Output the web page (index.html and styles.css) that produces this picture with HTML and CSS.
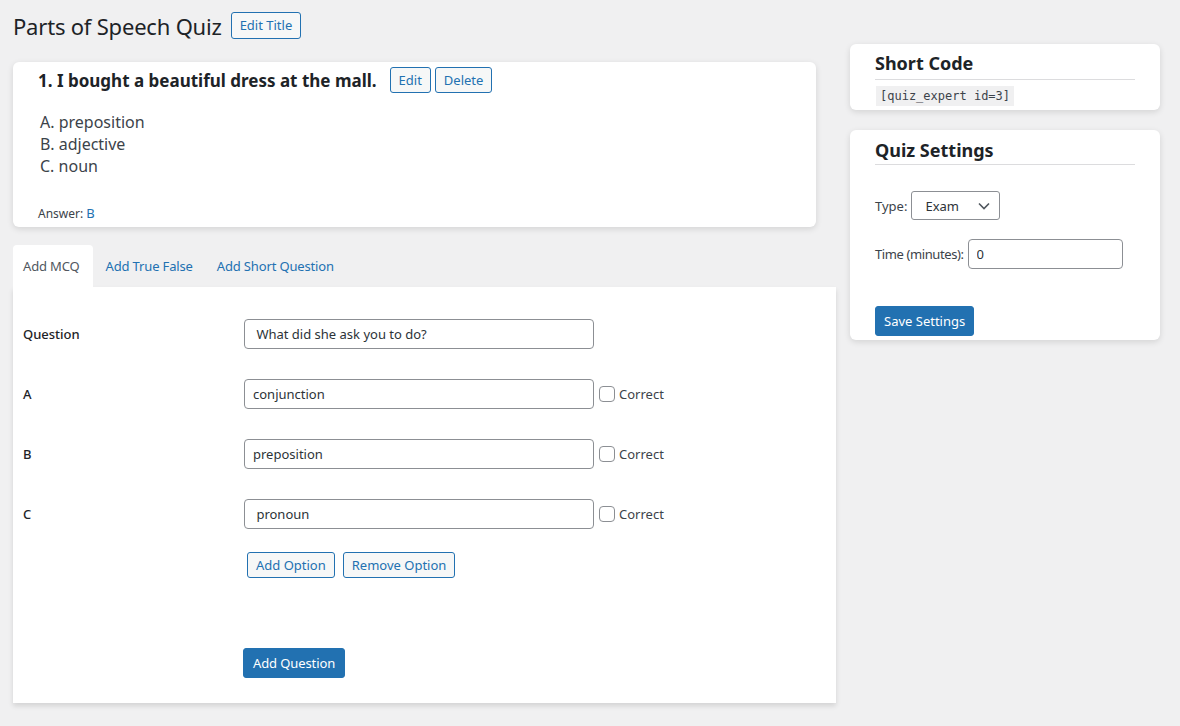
FILE: index.html
```html
<!DOCTYPE html>
<html lang="en">
<head>
<meta charset="utf-8">
<title>Parts of Speech Quiz</title>
<link rel="stylesheet" href="styles.css">
</head>
<body>
<div class="page">
  <div class="main">
    <div class="header">
      <h1 class="title">Parts of Speech Quiz</h1>
      <button class="btn btn-sec">Edit Title</button>
    </div>

    <div class="qcard">
      <div class="qhead">
        <h3 class="qtitle">1. I bought a beautiful dress at the mall.</h3>
        <button class="btn btn-sec btn-sm">Edit</button>
        <button class="btn btn-sec btn-sm">Delete</button>
      </div>
      <div class="qopts">
        <div>A. preposition</div>
        <div>B. adjective</div>
        <div>C. noun</div>
      </div>
      <div class="answer">Answer: <span class="ans">B</span></div>
    </div>

    <div class="tabs">
      <a class="tab tab-active">Add MCQ</a>
      <a class="tab">Add True False</a>
      <a class="tab">Add Short Question</a>
    </div>

    <div class="panel">
      <div class="frow">
        <div class="flabel">Question</div>
        <input class="finput" type="text" value=" What did she ask you to do?">
      </div>
      <div class="frow">
        <div class="flabel">A</div>
        <input class="finput" type="text" value="conjunction">
        <label class="chk"><span class="box"></span>Correct</label>
      </div>
      <div class="frow">
        <div class="flabel">B</div>
        <input class="finput" type="text" value="preposition">
        <label class="chk"><span class="box"></span>Correct</label>
      </div>
      <div class="frow">
        <div class="flabel">C</div>
        <input class="finput" type="text" value=" pronoun">
        <label class="chk"><span class="box"></span>Correct</label>
      </div>
      <div class="optbtns">
        <button class="btn btn-sec btn-sm">Add Option</button>
        <button class="btn btn-sec btn-sm">Remove Option</button>
      </div>
      <div class="submit">
        <button class="btn btn-pri btn-addq">Add Question</button>
      </div>
    </div>
  </div>

  <div class="side">
    <div class="scard scard-code">
      <h2 class="shead">Short Code</h2>
      <code class="code">[quiz_expert id=3]</code>
    </div>
    <div class="scard scard-set">
      <h2 class="shead">Quiz Settings</h2>
      <div class="srow srow-type">
        <span class="slabel">Type:</span>
        <div class="select">Exam
          <svg class="chev" width="12" height="8" viewBox="0 0 12 8"><path d="M1 1.5l5 5 5-5" fill="none" stroke="#50575e" stroke-width="1.6"/></svg>
        </div>
      </div>
      <div class="srow srow-time">
        <span class="slabel">Time (minutes):</span>
        <input class="tinput" type="text" value="0">
      </div>
      <button class="btn btn-pri btn-save">Save Settings</button>
    </div>
  </div>
</div>
</body>
</html>
```

FILE: styles.css
```css
* { box-sizing: border-box; }
html, body { margin: 0; padding: 0; }
body {
  background: #f0f0f1;
  color: #3c434a;
  font-family: "Noto Sans", "Open Sans", sans-serif;
  font-size: 13px;
  width: 1180px;
  height: 726px;
  overflow: hidden;
}
.page {
  display: flex;
  gap: 14px;
  padding-left: 13px;
}
.main { width: 823px; }
.side { width: 310px; padding-top: 44px; }

.header {
  display: flex;
  align-items: center;
  height: 27px;
  margin-top: 12px;
  gap: 9px;
}
.title {
  margin: 0;
  font-size: 22px;
  font-weight: 400;
  color: #1d2327;
  letter-spacing: -0.2px;
}

.btn {
  font-family: inherit;
  font-size: 13px;
  border-radius: 3px;
  cursor: pointer;
  line-height: 1;
}
.btn-sec {
  background: #f6f7f7;
  border: 1px solid #2271b1;
  color: #2271b1;
  height: 27px;
  padding: 0 8px;
}
.btn-sm { height: 26px; padding: 0 8px; }
.btn-pri {
  background: #2271b1;
  border: 1px solid #2271b1;
  color: #fff;
  height: 30px;
  padding: 0 10px;
}
.btn-addq { padding: 0 9px; letter-spacing: -0.1px; }

.qcard {
  margin-top: 23px;
  width: 803px;
  background: #fff;
  border-radius: 6px;
  box-shadow: 0 2px 6px rgba(0,0,0,0.12);
  padding: 5px 25px 5px 25px;
}
.qhead {
  display: flex;
  align-items: center;
  height: 26px;
  gap: 4px;
}
.qtitle {
  margin: 0 9px 0 0;
  font-size: 17px;
  font-weight: 700;
  color: #1d2327;
}
.qopts {
  margin-top: 18px;
  padding-left: 2px;
  font-size: 16px;
  line-height: 22px;
}
.answer {
  margin-top: 28px;
  font-size: 12px;
  line-height: 16px;
}
.ans { color: #2271b1; font-size: 13px; }

.tabs {
  display: flex;
  margin-top: 18px;
  height: 42px;
}
.tab {
  display: flex;
  align-items: center;
  padding: 0 11px 0 13px;
  font-size: 13px;
  color: #2271b1;
  letter-spacing: -0.15px;
}
.tab-active {
  background: #fff;
  color: #50575e;
  padding: 0 13px 0 10px;
  border-radius: 4px 4px 0 0;
}

.panel {
  background: #fff;
  height: 416px;
  padding: 32px 0 0 10px;
  box-shadow: 0 3px 5px rgba(0,0,0,0.12);
}
.frow {
  display: flex;
  align-items: center;
  height: 30px;
  margin-bottom: 30px;
}
.flabel {
  width: 221px;
  font-size: 13px;
  font-weight: 500;
  color: #1d2327;
}
.finput {
  width: 350px;
  height: 30px;
  border: 1px solid #8c8f94;
  border-radius: 4px;
  padding: 0 8px;
  font-family: inherit;
  font-size: 13px;
  color: #2c3338;
  background: #fff;
}
.chk {
  display: flex;
  align-items: center;
  margin-left: 5px;
  gap: 4px;
  font-size: 13px;
  color: #3c434a;
}
.box {
  width: 16px;
  height: 16px;
  border: 1px solid #8c8f94;
  border-radius: 4px;
  background: #fff;
}
.optbtns {
  margin-top: -7px;
  padding-left: 224px;
  display: flex;
  gap: 8px;
}
.submit {
  margin-top: 70px;
  padding-left: 220px;
}

.scard {
  background: #fff;
  border-radius: 6px;
  box-shadow: 0 2px 6px rgba(0,0,0,0.12);
  padding: 7px 25px 4px 25px;
}
.scard-code { height: 66px; }
.scard-set { margin-top: 20px; height: 210px; padding-top: 8px; }
.shead {
  margin: 0;
  font-size: 18px;
  font-weight: 700;
  color: #1d2327;
  line-height: 24px;
  padding-bottom: 4px;
  border-bottom: 1px solid #dcdcde;
}
.scard-set .shead { padding-bottom: 2px; }
.code {
  display: inline-block;
  margin-top: 6px;
  margin-left: 1px;
  background: #f0f0f1;
  font-family: "DejaVu Sans Mono", "Liberation Mono", monospace;
  font-size: 12px;
  line-height: 20px;
  padding: 0 4px;
  color: #3c434a;
}
.srow {
  display: flex;
  align-items: center;
  gap: 4px;
}
.slabel { font-size: 13px; }
.srow-time .slabel { letter-spacing: -0.4px; }
.srow-type { margin-top: 26px; }
.select {
  width: 89px;
  height: 29px;
  border: 1px solid #8c8f94;
  border-radius: 3px;
  display: flex;
  align-items: center;
  justify-content: space-between;
  padding: 0 9px 0 13px;
  font-size: 13px;
  color: #2c3338;
}
.srow-time { margin-top: 19px; }
.tinput {
  width: 155px;
  height: 30px;
  border: 1px solid #8c8f94;
  border-radius: 4px;
  padding: 0 8px;
  font-family: inherit;
  font-size: 13px;
  color: #2c3338;
}
.btn-save { margin-top: 37px; padding: 0 8px; }
```
